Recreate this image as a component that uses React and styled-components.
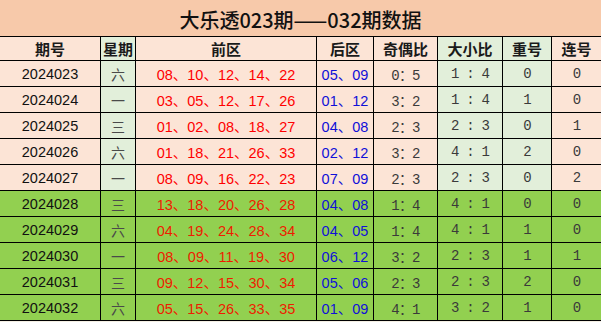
import React from 'react'
import styled, { createGlobalStyle } from 'styled-components'

const GlobalStyle = createGlobalStyle`
  html, body {
    margin: 0;
    padding: 0;
    background: #f4efe3;
  }
`

const COLS = '101px 35px 181px 57px 64px 65px 49px 49px'

const tones = {
  pink: '#fce4d6',
  mint: '#e2efda',
  lime: '#92d050',
}

const Sheet = styled.div`
  width: 601px;
  font-family: "Liberation Sans", "Noto Sans CJK SC", sans-serif;
`

const Title = styled.div`
  box-sizing: border-box;
  height: 37px;
  padding-top: 2px;
  border-bottom: 1px solid #000;
  background: #f7c9aa;
  display: flex;
  align-items: center;
  justify-content: center;
  font-family: "Noto Sans CJK SC", sans-serif;
  font-size: 20px;
  font-weight: 500;
  color: #111;
`

const Row = styled.div`
  display: grid;
  grid-template-columns: ${COLS};
  height: ${p => p.$h}px;
`

const Cell = styled.div`
  box-sizing: border-box;
  display: flex;
  align-items: center;
  justify-content: center;
  border-bottom: 1px solid #000;
  border-right: ${p => (p.$last ? 'none' : '1px solid #000')};
  background: ${p => tones[p.$tone]};
  color: ${p => p.$color || '#111'};
  font-size: 14.5px;
  white-space: nowrap;
`

const HeadText = styled.span`
  font-family: "Noto Sans CJK SC", sans-serif;
  font-size: 15px;
  font-weight: 700;
  color: #1a1a1a;
`

const Week = styled.span`
  font-family: "Noto Sans CJK SC", sans-serif;
  font-size: 14px;
  color: #4a4a4a;
`

const Mono = styled.span`
  font-family: "Liberation Mono", "Noto Sans CJK SC", monospace;
  font-size: 14px;
  letter-spacing: -0.8px;
  color: #3a3a3a;
`

const heads = ['期号', '星期', '前区', '后区', '奇偶比', '大小比', '重号', '连号']
const headTones = ['pink', 'mint', 'pink', 'pink', 'pink', 'mint', 'mint', 'pink']

const rows = [
  ['2024023', '六', '08、10、12、14、22', '05、09', '0：5', '1 : 4', '0', '0'],
  ['2024024', '一', '03、05、12、17、26', '01、12', '3：2', '1 : 4', '1', '0'],
  ['2024025', '三', '01、02、08、18、27', '04、08', '2：3', '2 : 3', '0', '1'],
  ['2024026', '六', '01、18、21、26、33', '02、12', '3：2', '4 : 1', '2', '0'],
  ['2024027', '一', '08、09、16、22、23', '07、09', '2：3', '2 : 3', '0', '2'],
  ['2024028', '三', '13、18、20、26、28', '04、08', '1：4', '4 : 1', '0', '0'],
  ['2024029', '六', '04、19、24、28、34', '04、05', '1：4', '4 : 1', '1', '0'],
  ['2024030', '一', '08、09、11、19、30', '06、12', '3：2', '2 : 3', '1', '1'],
  ['2024031', '三', '09、12、15、30、34', '05、06', '2：3', '2 : 3', '2', '0'],
  ['2024032', '六', '05、15、26、33、35', '01、09', '4：1', '3 : 2', '1', '0'],
]

const DataRow = ({ data, recent }) => {
  const [issue, week, front, back, odd, big, rep, seq] = data
  const base = recent ? 'lime' : 'pink'
  const alt = recent ? 'lime' : 'mint'
  return (
    <Row $h={26}>
      <Cell $tone={base}>{issue}</Cell>
      <Cell $tone={alt}><Week>{week}</Week></Cell>
      <Cell $tone={base} $color={recent ? '#ee1c00' : '#ff0000'}>{front}</Cell>
      <Cell $tone={base} $color="#1010d8">{back}</Cell>
      <Cell $tone={base}><Mono>{odd}</Mono></Cell>
      <Cell $tone={alt}><Mono>{big}</Mono></Cell>
      <Cell $tone={alt}><Mono>{rep}</Mono></Cell>
      <Cell $tone={base} $last><Mono>{seq}</Mono></Cell>
    </Row>
  )
}

export default function App() {
  return (
    <>
      <GlobalStyle />
      <Sheet>
        <Title>大乐透023期——032期数据</Title>
        <Row $h={24}>
          {heads.map((h, i) => (
            <Cell key={h} $tone={headTones[i]} $last={i === heads.length - 1}>
              <HeadText>{h}</HeadText>
            </Cell>
          ))}
        </Row>
        {rows.map((r, i) => (
          <DataRow key={r[0]} data={r} recent={i >= 5} />
        ))}
      </Sheet>
    </>
  )
}
